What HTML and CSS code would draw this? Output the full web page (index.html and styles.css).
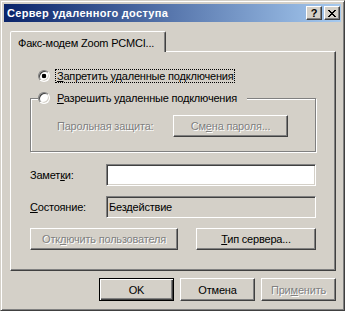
FILE: index.html
```html
<!DOCTYPE html>
<html lang="ru">
<head>
  <meta charset="UTF-8" />
  <title>Сервер удаленного доступа</title>
  <link rel="stylesheet" href="styles.css">
</head>
<body>
  <div class="window">
    <div class="titlebar">
      <span class="title">Сервер удаленного доступа</span>
      <div class="caption-buttons">
        <button class="cap-btn help">?</button>
        <button class="cap-btn close">
          <svg width="8" height="7" viewBox="0 0 8 7">
            <path d="M0 0h2v1h1v1h2v-1h1v-1h2v1h-1v1h-1v1h-1v1h1v1h1v1h1v1h-2v-1h-1v-1h-2v1h-1v1h-2v-1h1v-1h1v-1h1v-1h-1v-1h-1v-1h-1z" fill="#000"/>
          </svg>
        </button>
      </div>
    </div>

    <div class="content">
      <div class="tabs">
        <div class="tab">Факс-модем Zoom PCMCI...</div>
      </div>

      <div class="panel">
        <div class="radio-row deny">
          <span class="radio checked"></span>
          <span class="focus"><u>З</u>апретить удаленные подключения</span>
        </div>

        <div class="group">
          <div class="group-legend">
            <span class="radio"></span>
            <span class="radio-label"><u>Р</u>азрешить удаленные подключения</span>
          </div>
          <div class="password-row">
            <span class="disabled">Парольная защита:</span>
            <button class="btn btn-password" disabled><span class="disabled">См<u>е</u>на пароля...</span></button>
          </div>
        </div>

        <div class="field-row notes">
          <span class="field-label">Замет<u>к</u>и:</span>
          <div class="edit"></div>
        </div>

        <div class="field-row">
          <span class="field-label"><u>С</u>остояние:</span>
          <div class="edit readonly">Бездействие</div>
        </div>

        <div class="panel-buttons">
          <button class="btn btn-disconnect" disabled><span class="disabled">Отк<u>л</u>ючить пользователя</span></button>
          <button class="btn btn-type"><u>Т</u>ип сервера...</button>
        </div>
      </div>

      <div class="dialog-buttons">
        <button class="btn btn-dialog default">OK</button>
        <button class="btn btn-dialog">Отмена</button>
        <button class="btn btn-dialog" disabled><span class="disabled">При<u>м</u>енить</span></button>
      </div>
    </div>
  </div>
</body>
</html>
```

FILE: styles.css
```css
html, body {
  margin: 0;
  padding: 0;
  background: #d4d0c8;
}

body {
  font-family: 'Liberation Sans', Arial, sans-serif;
  font-size: 11px;
  letter-spacing: -0.2px;
  color: #000;
}

button {
  font-family: inherit;
  font-size: 11px;
  font-weight: normal;
  letter-spacing: inherit;
  color: #000;
  padding: 0;
  margin: 0;
}

u {
  text-underline-offset: 1px;
}

.window {
  width: 345px;
  height: 311px;
  box-sizing: border-box;
  border: 1px solid;
  border-color: #d4d0c8 #404040 #404040 #d4d0c8;
  box-shadow: inset 1px 1px #fff, inset -1px -1px #808080;
  padding: 3px;
  background: #d4d0c8;
}

/* title bar */
.titlebar {
  height: 18px;
  display: flex;
  align-items: center;
  justify-content: space-between;
  padding: 0 1px 0 3px;
  background: linear-gradient(to right, #0a246a, #a6caf0);
}

.title {
  color: #fff;
  font-weight: bold;
  font-size: 11px;
  letter-spacing: 0.3px;
}

.caption-buttons {
  display: flex;
  gap: 2px;
}

.cap-btn {
  width: 16px;
  height: 14px;
  box-sizing: border-box;
  display: flex;
  align-items: center;
  justify-content: center;
  background: #d4d0c8;
  border: 1px solid;
  border-color: #fff #404040 #404040 #fff;
  box-shadow: inset -1px -1px #808080;
  font-weight: bold;
  font-size: 11px;
  line-height: 1;
}

/* tab + panel */
.content {
  padding: 9px 5px 0 6px;
}

.tabs {
  display: flex;
  height: 20px;
  align-items: flex-start;
}

.tab {
  position: relative;
  z-index: 1;
  width: 156px;
  height: 21px;
  box-sizing: border-box;
  padding: 4px 0 0 7px;
  border: 1px solid;
  border-bottom: 0;
  border-color: #fff #404040 transparent #fff;
  border-radius: 2px 2px 0 0;
  box-shadow: inset -1px 0 #808080;
  background: #d4d0c8;
  line-height: 14px;
}

.panel {
  height: 220px;
  box-sizing: border-box;
  border: 1px solid;
  border-color: #fff #404040 #404040 #fff;
  box-shadow: inset -1px -1px #808080;
  padding: 17px 19px 0 19px;
}

.radio-row,
.group-legend {
  display: flex;
  align-items: center;
  height: 14px;
  line-height: 14px;
}

.radio-row.deny {
  padding-left: 8px;
}

.radio {
  width: 12px;
  height: 12px;
  box-sizing: border-box;
  border-radius: 50%;
  border: 1px solid;
  border-color: #808080 #fff #fff #808080;
  box-shadow: inset 1px 1px #404040, inset -1px -1px #d4d0c8;
  background: #fff;
  flex: none;
}

.radio.checked {
  background: radial-gradient(circle, #000 2px, #fff 2.6px);
}

.focus {
  margin-left: 5px;
  padding: 0 1px;
  border: 1px dotted #000;
  line-height: 12px;
}

.radio-label {
  margin-left: 7px;
}

.group {
  position: relative;
  margin-top: 15px;
  height: 54px;
  box-sizing: border-box;
  border: 1px solid #808080;
  box-shadow: inset 1px 1px #fff, 1px 1px #fff;
  padding: 16px 0 0 26px;
}

.group-legend {
  position: absolute;
  top: -8px;
  left: 7px;
  padding-right: 10px;
  background: #d4d0c8;
}

.password-row {
  display: flex;
  align-items: center;
}

.password-row > .disabled {
  width: 116px;
}

.disabled {
  color: #808080;
  text-shadow: 1px 1px #fff;
}

.btn {
  height: 22px;
  box-sizing: border-box;
  background: #d4d0c8;
  border: 1px solid;
  border-color: #fff #404040 #404040 #fff;
  box-shadow: inset -1px -1px #808080;
  text-align: center;
}

.btn-password {
  width: 115px;
}

.field-row {
  display: flex;
  align-items: center;
  margin-top: 10px;
}

.field-row.notes {
  margin-top: 12px;
}

.field-label {
  width: 76px;
}

.edit {
  flex: 1;
  height: 22px;
  box-sizing: border-box;
  border: 1px solid;
  border-color: #808080 #fff #fff #808080;
  box-shadow: inset 1px 1px #404040, inset -1px -1px #d4d0c8;
  background: #fff;
  padding: 3px 0 0 2px;
  line-height: 14px;
}

.edit.readonly {
  background: #d4d0c8;
}

.panel-buttons {
  display: flex;
  justify-content: space-between;
  margin-top: 10px;
}

.btn-disconnect {
  width: 148px;
}

.btn-type {
  width: 120px;
}

.dialog-buttons {
  display: flex;
  justify-content: flex-end;
  gap: 6px;
  margin-top: 7px;
}

.btn-dialog {
  width: 75px;
  height: 23px;
}

.btn-dialog.default {
  border-color: #000;
  box-shadow: inset 1px 1px #fff, inset -1px -1px #404040, inset -2px -2px #808080;
}
```
